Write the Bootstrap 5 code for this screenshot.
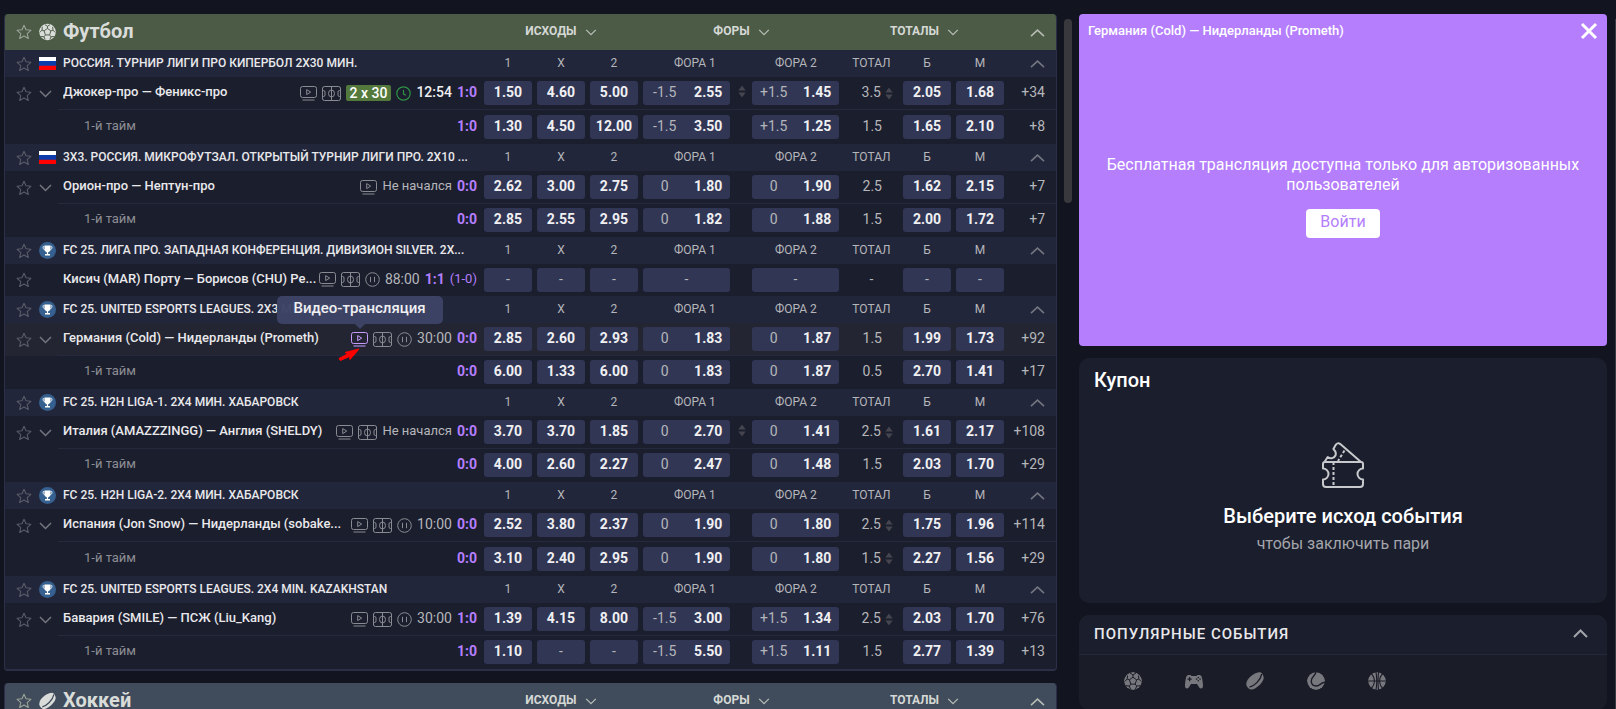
<!DOCTYPE html>
<html lang="ru">
<head>
<meta charset="utf-8">
<meta name="viewport" content="width=device-width, initial-scale=1">
<title>Live — Футбол</title>
<link href="https://cdn.jsdelivr.net/npm/bootstrap@5.3.0/dist/css/bootstrap.min.css" rel="stylesheet">
<style>
  :root { --page:#12151f; --panel:#1b1e2d; --band:#22263a; --odd:#313655; --line:#25293c; --violet:#b47efd; --soft:#b5b6ba; --dim:#8d8e94; }
  body { background:var(--page); color:#e9e9ec; font-family:Roboto,"Liberation Sans",sans-serif; font-size:14px; line-height:20px; }
  button { font:inherit; color:inherit; background:none; border:0; padding:0; }
  svg { display:block; flex:none; }
  .shell { height:100vh; padding:14px 0 0 4px; }
  .rail { width:22px; padding:5px 7px 0; flex:none; }
  .thumb { height:26vh; border-radius:4px; background:#39393d; }
  .sidebar { width:528px; flex:none; }
  .page-edge { width:1px; flex:none; margin:5px 0 0 8px; background:#3a3b42; }

  .line-block { background:var(--panel); border:1px solid #2b2f48; border-top:0; border-bottom-width:2px; border-radius:4px; overflow:hidden; margin-bottom:12px; }
  .line-table { width:100%; table-layout:fixed; border-collapse:separate; border-spacing:0; }
  .line-table th, .line-table td { padding:0; vertical-align:middle; }
  .w-tools { width:53px; } .w-odd { width:53px; } .w-f1 { width:109px; } .w-f2 { width:88px; } .w-total { width:63px; } .w-more { width:47px; }
  .tools { display:flex; align-items:center; gap:7px; padding-left:11px; }
  .star { color:#595c68; }
  .sport-row th { height:36px; }
  .sport-green { background:#4b5b46; } .sport-blue { background:#404c5c; }
  .sport-row .star { color:#9aa397; }
  .sport-name { font-size:20px; line-height:24px; font-weight:700; color:#d9dcd9; margin:0; padding:0 0 2px 5px; }
  .sport-icon { color:#d9dcd9; }
  .market { font-size:12px; font-weight:700; color:#d5d8d5; display:inline-flex; align-items:center; gap:8px; padding-bottom:3px; }
  .market svg { margin-top:3px; color:#b5bbb3; }
  .league-row th { height:27px; background:var(--band); font-size:12px; line-height:18px; font-weight:400; color:var(--soft); text-align:center; }
  .league-row th:not(:first-child):not(.more) { padding-bottom:2px; }
  .line-table th.odd-head { padding-right:5px; }
  .league-row th.league-name { font-weight:500; color:#e9e9ec; text-align:left; padding-left:5px; padding-right:7px; }
  .event-row td { height:33px; }
  .event-row td:not(:first-child) { border-bottom:1px solid var(--line); }
  .event-row.last td { border-bottom-color:transparent; }
  .roomy .sub td { height:34px; }
  .single td { height:32px; }
  .hovered td { background:#232632; }
  .info { display:flex; align-items:center; padding:0 7px 0 5px; }
  .teams, .period, .clock-text, .clock-live, .score, .half { padding-bottom:2px; }
  .teams { font-size:13px; font-weight:500; flex:1 1 0; min-width:0; }
  .period { font-size:13px; color:var(--dim); padding-left:21px; flex:1; }
  .marks { display:flex; align-items:center; gap:5px; flex:none; color:#898b92; }
  .clock-text { color:var(--soft); }
  .clock-live { color:#f0f0f2; font-weight:500; }
  .score { color:var(--violet); font-weight:700; }
  .half, .waiting { font-size:13px; }
  .half { color:var(--violet); }
  .fmt { background:#54793d; color:#fff; font-weight:500; line-height:16px; border-radius:2px; padding:0 4px; }
  .odd { background:var(--odd); border-radius:3px; height:24px; width:48px; display:flex; align-items:center; justify-content:center; font-weight:700; color:#f0f0f2; padding-bottom:2px; }
  .odd.wide { width:87px; flex:none; }
  .odd.wide span { flex:1; text-align:center; }
  .odd .hcp, .odd.off { color:var(--soft); font-weight:400; }
  .total { display:flex; align-items:center; justify-content:flex-end; gap:4px; color:var(--soft); padding-right:10px; }
  .total-value { padding-bottom:2px; }
  .total.plain { padding-right:21px; }
  .total.none { justify-content:center; padding:0; }
  .stepper { color:#44454f; }
  .line-table .more { color:var(--soft); padding-right:11px; text-align:right; }
  .line-table td.more { padding-bottom:2px; }
  .fold { color:#74767f; } .sport-row .fold { color:#b5bbb3; }
  .more .fold { display:inline-block; vertical-align:middle; }

  .hint-wrap { position:relative; color:#c89cff; }
  .hint { position:absolute; left:50%; bottom:23px; transform:translateX(-50%); width:166px; height:28px; line-height:25px; text-align:center; background:rgba(60,67,101,.97); color:#f0f0f2; border-radius:5px; font-weight:500; font-size:15px; z-index:2; }
  .hint::after { content:""; position:absolute; left:50%; top:100%; margin-left:-5px; border:5px solid transparent; border-top-color:#3c4365; border-bottom:0; }
  .pointer { position:absolute; right:8px; top:16px; z-index:2; }

  .stream { background:var(--violet); border-radius:4px; height:332px; margin-bottom:12px; padding:8px 9px; color:#fff; }
  .stream-title { font-size:13px; font-weight:500; line-height:18px; }
  .stream-body { padding-top:15px; }
  .stream-note { font-size:16px; line-height:20px; }
  .login { background:#fff; color:var(--violet); border-radius:4px; font-size:16px; height:29px; width:74px; margin-top:14px; line-height:24px; padding-bottom:3px; }
  .coupon { background:var(--panel); border-radius:10px; height:245px; margin-bottom:12px; padding:10px 15px; }
  .coupon h2 { font-size:20px; line-height:24px; font-weight:500; margin:0; color:#fff; }
  .coupon-body { padding-top:12px; }
  .coupon .lead-text { font-size:20px; line-height:24px; font-weight:500; color:#fff; margin:16px 0 4px; }
  .coupon .sub-text { font-size:16px; line-height:24px; color:#a4a5ab; margin:0; }
  .popular { background:#1a1c27; border-radius:10px; overflow:hidden; }
  .popular-head { background:var(--panel); border-bottom:1px solid var(--line); height:40px; padding:0 19px 2px 15px; }
  .popular-head h2 { font-size:15px; line-height:20px; letter-spacing:1px; font-weight:500; margin:0; }
  .popular-tabs { color:#77787e; padding:17px 45px 20px; gap:43px; }
</style>
</head>
<body class="overflow-hidden">

<svg class="position-absolute" width="0" height="0" aria-hidden="true">
  <symbol id="i-star" viewBox="0 0 16 16"><path d="M8 1.3l2 4.5 4.9.5-3.7 3.3 1.1 4.8L8 11.9l-4.300 2.500 1.100-4.800L1.100 6.300 6 5.800z" fill="none" stroke="currentColor" stroke-width="1.100" stroke-linejoin="round"/></symbol>
  <symbol id="i-down" viewBox="0 0 13 8"><path d="M1 1l5.500 5.500L12 1" fill="none" stroke="currentColor" stroke-width="1.500"/></symbol>
  <symbol id="i-up" viewBox="0 0 15 8"><path d="M1 7.200l6.500-6 6.500 6" fill="none" stroke="currentColor" stroke-width="1.600"/></symbol>
  <symbol id="i-tv" viewBox="0 0 17 15"><g fill="none" stroke="currentColor"><rect x=".5" y=".5" width="16" height="11" rx="2"/><path d="M6.700 3.600v5l4-2.500z" stroke-linejoin="round"/><path d="M2.500 14h12"/></g></symbol>
  <symbol id="i-field" viewBox="0 0 19 15"><g fill="none" stroke="currentColor"><path d="M.5 3V2.500A2 2 0 0 1 2.500.5h14a2 2 0 0 1 2 2V3M.5 12v.5a2 2 0 0 0 2 2h14a2 2 0 0 0 2-2V12M9.500.5v14M.5 4.500h1a1.500 1.500 0 0 1 1.500 1.500v3a1.500 1.500 0 0 1-1.500 1.500h-1M18.500 4.500h-1A1.500 1.500 0 0 0 16 6v3a1.500 1.500 0 0 0 1.500 1.500h1M.5 2v11M18.500 2v11"/><ellipse cx="9.500" cy="7.500" rx="3" ry="3.500"/></g></symbol>
  <symbol id="i-pause" viewBox="0 0 15 15"><g fill="none" stroke="currentColor"><circle cx="7.500" cy="7.500" r="6.800"/><path d="M5.500 4.800v5.400M9.500 4.800v5.400"/></g></symbol>
  <symbol id="i-clock" viewBox="0 0 15 15"><g fill="none" stroke="#2f9146" stroke-width="1.200"><circle cx="7.500" cy="7.500" r="6.700"/><path d="M7.500 3.800v4.200l2.500 1.200"/></g></symbol>
  <symbol id="i-step" viewBox="0 0 8 13"><path d="M4 .5l3.700 5H.3zM4 12.500l3.700-5H.3z" fill="currentColor"/></symbol>
  <symbol id="i-flag" viewBox="0 0 17 13"><path fill="#fff" d="M0 0h17v4.500H0z"/><path fill="#0b3cab" d="M0 4h17v5H0z"/><path fill="#f00" d="M0 8.700h17V13H0z"/></symbol>
  <symbol id="i-cup" viewBox="0 0 17 17"><circle cx="8.500" cy="8.500" r="8.500" fill="#35608f"/><path fill="#fff" d="M5.500 3.500h6v3.500c0 2-1.200 3-2.400 3.300v1.700H11v1.500H6V12h1.900v-1.700C6.700 10 5.500 9 5.500 7z"/><path d="M5.500 4.700H4c0 2 .6 3 2 3.300M11.500 4.700H13c0 2-.6 3-2 3.300" fill="none" stroke="#fff" stroke-width=".8"/></symbol>
  <mask id="m-ball"><circle cx="9" cy="9" r="9" fill="#fff"/><g fill="none" stroke="#000" stroke-width="1"><path d="M9 5.200l3.600 2.600-1.400 4.300H6.800L5.400 7.800zM9 5.200V3M12.600 7.800l2.200-.8M11.200 12.100l1.500 2M6.800 12.100l-1.500 2M5.400 7.800L3.200 7M9 3L6 1M9 3l3-2M3.200 7L3.500 3.500M3.200 7L.8 9.500M14.800 7l-.3-3.500M14.800 7l2.400 2.500M12.700 14.100l3.300-.4M12.700 14.100L11.500 17M5.300 14.100l-3.300-.4M5.300 14.100L6.500 17"/></g></mask>
  <symbol id="i-ball" viewBox="0 0 18 18"><circle cx="9" cy="9" r="9" fill="currentColor" mask="url(#m-ball)"/></symbol>
  <mask id="m-puck"><path d="M0 0h18v18H0z" fill="#fff"/><path d="M3.500 15.200C8 14 14.500 8.500 15.800 2" fill="none" stroke="#000" stroke-width="1.300"/></mask>
  <symbol id="i-puck" viewBox="0 0 18 18"><path d="M.7 14C-.8 10.800 2 6 6.500 3 10 .6 13.300-.4 14.800.6c1.300.8 2.800 3 2.900 5.300-.3 4.300-7.200 11-12.200 11.700C3.700 17.700 1.500 15.800.7 14z" fill="currentColor" mask="url(#m-puck)"/></symbol>
  <symbol id="i-pad" viewBox="0 0 18 18"><path fill="currentColor" fill-rule="evenodd" d="M3.500 3h2l1 1h5l1-1h2c1.300 0 2 1 2.400 2.500.6 2.500 1.100 6 1.100 8.500 0 1.500-.8 2.500-2 2.500S14 15.500 13 13.500L12 12H6l-1 1.500c-1 2-1.800 3-3 3S0 15.500 0 14c0-2.500.5-6 1.100-8.500C1.500 4 2.200 3 3.500 3zM4 5v1.500H2.500v1.200H4v1.500h1.200V7.700h1.500V6.500H5.200V5zm9.300-.3a.8.800 0 1 0 0 1.600.8.800 0 0 0 0-1.600zm0 3.300a.8.800 0 1 0 0 1.600.8.800 0 0 0 0-1.600zm-1.700-1.700a.8.800 0 1 0 0 1.600.8.800 0 0 0 0-1.600zm3.400 0a.8.800 0 1 0 0 1.600.8.800 0 0 0 0-1.600z"/></symbol>
  <mask id="m-ten"><circle cx="9" cy="9" r="9" fill="#fff"/><path d="M9-.5C9 3.500 4.300 4 4.300 9c0 3.500 2.300 5 5 5 3.500 0 4.500-3.700 9-3.700" fill="none" stroke="#000" stroke-width="1.400"/></mask>
  <symbol id="i-tennis" viewBox="0 0 18 18"><circle cx="9" cy="9" r="9" fill="currentColor" mask="url(#m-ten)"/></symbol>
  <mask id="m-bas"><circle cx="9" cy="9" r="9" fill="#fff"/><path d="M0 9h18M3 1.500c4.500 4 4.500 11 0 15M15 1.500c-4.500 4-4.500 11 0 15M8 0c1 6 1 12 0 18M10.500 0c-.6 6-.6 12 0 18" fill="none" stroke="#000" stroke-width="1.100"/></mask>
  <symbol id="i-basket" viewBox="0 0 18 18"><circle cx="9" cy="9" r="9" fill="currentColor" mask="url(#m-bas)"/></symbol>
</svg>

<div class="shell d-flex overflow-hidden">
  <main class="flex-grow-1" id="lines"></main>
  <div class="rail"><div class="thumb"></div></div>

  <aside class="sidebar">
    <section class="stream d-flex flex-column">
      <div class="d-flex justify-content-between">
        <span class="stream-title">Германия (Cold) — Нидерланды (Prometh)</span>
        <button type="button" aria-label="Закрыть"><svg width="18" height="18" viewBox="0 0 18 18"><path d="M2 2l14 14M16 2L2 16" stroke="#fff" stroke-width="3"/></svg></button>
      </div>
      <div class="stream-body flex-grow-1 d-flex flex-column align-items-center justify-content-center text-center">
        <p class="stream-note mb-0">Бесплатная трансляция доступна только для авторизованных пользователей</p>
        <button type="button" class="login">Войти</button>
      </div>
    </section>

    <section class="coupon d-flex flex-column">
      <h2>Купон</h2>
      <div class="coupon-body flex-grow-1 d-flex flex-column align-items-center justify-content-center text-center">
        <svg width="42" height="46" viewBox="0 0 42 46"><g fill="none" stroke="#c8c9cc" stroke-width="2" stroke-linejoin="round"><path d="M3 20h36a2 2 0 0 1 2 2v4.500a5.500 5.500 0 0 0 0 11V42a3 3 0 0 1-3 3H4a3 3 0 0 1-3-3v-4.500a5.500 5.500 0 0 0 0-11V22a2 2 0 0 1 2-2z"/><path d="M2.500 20l3.200-5c3 2.500 6.600 1 7.700-1.500 1-2.300.2-4.500-2-6.500l2.400-4.200c.9-1.500 2.700-2 4.200-1L39 20"/><path d="M11.500 20v25" stroke-dasharray="3 2"/><path d="M22.500 8.500L16 19" stroke-dasharray="3 2"/></g></svg>
        <p class="lead-text">Выберите исход события</p>
        <p class="sub-text">чтобы заключить пари</p>
      </div>
    </section>

    <section class="popular">
      <div class="popular-head d-flex align-items-center justify-content-between">
        <h2>ПОПУЛЯРНЫЕ СОБЫТИЯ</h2>
        <button type="button" aria-label="Свернуть"><svg width="15" height="9" viewBox="0 0 15 9"><path d="M1 8l6.500-6.500L14 8" fill="none" stroke="#a4a5ab" stroke-width="2"/></svg></button>
      </div>
      <div class="popular-tabs d-flex">
        <button type="button" aria-label="Футбол"><svg width="18" height="18"><use href="#i-ball"/></svg></button>
        <button type="button" aria-label="Киберспорт"><svg width="18" height="18"><use href="#i-pad"/></svg></button>
        <button type="button" aria-label="Хоккей"><svg width="18" height="18"><use href="#i-puck"/></svg></button>
        <button type="button" aria-label="Теннис"><svg width="18" height="18"><use href="#i-tennis"/></svg></button>
        <button type="button" aria-label="Баскетбол"><svg width="18" height="18"><use href="#i-basket"/></svg></button>
      </div>
    </section>
  </aside>
  <div class="page-edge"></div>
</div>

<script src="https://cdn.jsdelivr.net/npm/bootstrap@5.3.0/dist/js/bootstrap.bundle.min.js"></script>
<script>
  const icon = (id, w, h, cls = '') => `<svg class="${cls}" width="${w}" height="${h}"><use href="#i-${id}"/></svg>`;
  const star = () => `<button type="button" class="star" aria-label="В избранное">${icon('star', 16, 16)}</button>`;
  const fold = () => `<button type="button" class="fold" aria-label="Свернуть">${icon('up', 15, 8)}</button>`;
  const stepper = () => `<button type="button" class="stepper" aria-label="Другие значения">${icon('step', 8, 13)}</button>`;

  // Odds order: 1, X, 2, [handicap 1, odd], [handicap 2, odd], total, over, under, extra markets.
  // f1step / tstep: the handicap or the total can be switched.
  const leagues = [
    { icon: 'flag', name: 'РОССИЯ. ТУРНИР ЛИГИ ПРО КИПЕРБОЛ 2X30 МИН.', roomy: true, rows: [
      { teams: 'Джокер-про — Феникс-про', marks: ['tv', 'field', 'fmt', 'clock'], live: '12:54', score: '1:0', odds: ['1.50', '4.60', '5.00', ['-1.5', '2.55'], ['+1.5', '1.45'], '3.5', '2.05', '1.68', '+34'], f1step: true, tstep: true },
      { score: '1:0', odds: ['1.30', '4.50', '12.00', ['-1.5', '3.50'], ['+1.5', '1.25'], '1.5', '1.65', '2.10', '+8'] } ] },
    { icon: 'flag', name: '3X3. РОССИЯ. МИКРОФУТЗАЛ. ОТКРЫТЫЙ ТУРНИР ЛИГИ ПРО. 2X10 ...', rows: [
      { teams: 'Орион-про — Нептун-про', marks: ['tv'], wait: 'Не начался', score: '0:0', odds: ['2.62', '3.00', '2.75', ['0', '1.80'], ['0', '1.90'], '2.5', '1.62', '2.15', '+7'] },
      { score: '0:0', odds: ['2.85', '2.55', '2.95', ['0', '1.82'], ['0', '1.88'], '1.5', '2.00', '1.72', '+7'] } ] },
    { icon: 'cup', name: 'FC 25. ЛИГА ПРО. ЗАПАДНАЯ КОНФЕРЕНЦИЯ. ДИВИЗИОН SILVER. 2X...', rows: [
      { teams: 'Кисич (MAR) Порту — Борисов (CHU) Ре...', marks: ['tv', 'field', 'pause'], time: '88:00', score: '1:1', half: '(1-0)', single: true, odds: ['-', '-', '-', '-', '-', '-', '-', '-', ''] } ] },
    { icon: 'cup', name: 'FC 25. UNITED ESPORTS LEAGUES. 2X3 MIN. CZECH REPUBLIC', rows: [
      { teams: 'Германия (Cold) — Нидерланды (Prometh)', marks: ['tvhint', 'field', 'pause'], time: '30:00', score: '0:0', hovered: true, odds: ['2.85', '2.60', '2.93', ['0', '1.83'], ['0', '1.87'], '1.5', '1.99', '1.73', '+92'] },
      { score: '0:0', odds: ['6.00', '1.33', '6.00', ['0', '1.83'], ['0', '1.87'], '0.5', '2.70', '1.41', '+17'] } ] },
    { icon: 'cup', name: 'FC 25. H2H LIGA-1. 2X4 МИН. ХАБАРОВСК', rows: [
      { teams: 'Италия (AMAZZZINGG) — Англия (SHELDY)', marks: ['tv', 'field'], wait: 'Не начался', score: '0:0', odds: ['3.70', '3.70', '1.85', ['0', '2.70'], ['0', '1.41'], '2.5', '1.61', '2.17', '+108'], f1step: true, tstep: true },
      { score: '0:0', odds: ['4.00', '2.60', '2.27', ['0', '2.47'], ['0', '1.48'], '1.5', '2.03', '1.70', '+29'] } ] },
    { icon: 'cup', name: 'FC 25. H2H LIGA-2. 2X4 МИН. ХАБАРОВСК', roomy: true, rows: [
      { teams: 'Испания (Jon Snow) — Нидерланды (sobake...', marks: ['tv', 'field', 'pause'], time: '10:00', score: '0:0', odds: ['2.52', '3.80', '2.37', ['0', '1.90'], ['0', '1.80'], '2.5', '1.75', '1.96', '+114'], tstep: true },
      { score: '0:0', odds: ['3.10', '2.40', '2.95', ['0', '1.90'], ['0', '1.80'], '1.5', '2.27', '1.56', '+29'], tstep: true } ] },
    { icon: 'cup', name: 'FC 25. UNITED ESPORTS LEAGUES. 2X4 MIN. KAZAKHSTAN', rows: [
      { teams: 'Бавария (SMILE) — ПСЖ (Liu_Kang)', marks: ['tv', 'field', 'pause'], time: '30:00', score: '1:0', odds: ['1.39', '4.15', '8.00', ['-1.5', '3.00'], ['+1.5', '1.34'], '2.5', '2.03', '1.70', '+76'], tstep: true },
      { score: '1:0', odds: ['1.10', '-', '-', ['-1.5', '5.50'], ['+1.5', '1.11'], '1.5', '2.77', '1.39', '+13'] } ] }
  ];

  const markIcons = {
    tv: icon('tv', 17, 15),
    field: icon('field', 19, 15),
    pause: icon('pause', 15, 15),
    clock: icon('clock', 15, 15),
    fmt: '<span class="fmt">2 x 30</span>',
    tvhint: `<span class="hint-wrap">${icon('tv', 17, 15)}<span class="hint" role="tooltip">Видео-трансляция</span>
      <svg class="pointer" width="22" height="13" viewBox="0 0 22 13"><path d="M21 1L7 4.500l3 1.300L1 10.500 2.300 12.500 11.500 8.500l.5 3z" fill="#f00" stroke="#f00"/></svg></span>`
  };

  const odd = v => `<td><button type="button" class="odd ${v === '-' ? 'off' : ''}">${v}</button></td>`;
  const wide = v => Array.isArray(v)
    ? `<button type="button" class="odd wide"><span class="hcp">${v[0]}</span><span>${v[1]}</span></button>`
    : `<button type="button" class="odd wide off">${v}</button>`;

  const clock = r => r.live ? `<span class="clock-live">${r.live}</span>`
    : r.wait ? `<span class="clock-text waiting">${r.wait}</span>`
    : r.time ? `<span class="clock-text">${r.time}</span>` : '';

  const eventRow = (r, last) => {
    const o = r.odds;
    const cls = [r.teams ? '' : 'sub', r.single ? 'single' : '', r.hovered ? 'hovered' : '', last ? 'last' : ''].join(' ');
    const expander = r.single ? '' : `<button type="button" class="fold" aria-label="Раскрыть">${icon('down', 13, 8)}</button>`;
    const name = r.teams ? `<span class="teams text-truncate">${r.teams}</span>` : '<span class="period">1-й тайм</span>';
    return `<tr class="event-row ${cls}">
      <td>${r.teams ? `<div class="tools">${star()}${expander}</div>` : ''}</td>
      <td><div class="info">${name}<span class="marks">${(r.marks || []).map(m => markIcons[m]).join('')}${clock(r)}<span class="score">${r.score}</span>${r.half ? `<span class="half">${r.half}</span>` : ''}</span></div></td>
      ${odd(o[0])}${odd(o[1])}${odd(o[2])}
      <td><div class="d-flex align-items-center">${wide(o[3])}${r.f1step ? `<span class="ps-2">${stepper()}</span>` : ''}</div></td>
      <td>${wide(o[4])}</td>
      <td><div class="total ${o[5] === '-' ? 'none' : r.tstep ? '' : 'plain'}"><span class="total-value">${o[5]}</span>${r.tstep ? stepper() : ''}</div></td>
      ${odd(o[6])}${odd(o[7])}
      <td class="more">${o[8]}</td></tr>`;
  };

  const league = l => `<tbody class="${l.roomy ? 'roomy' : ''}">
    <tr class="league-row"><th><div class="tools">${star()}${l.icon === 'flag' ? icon('flag', 17, 13) : icon('cup', 17, 17)}</div></th>
    <th class="league-name text-truncate" scope="colgroup">${l.name}</th>
    <th class="odd-head">1</th><th class="odd-head">X</th><th class="odd-head">2</th><th class="odd-head">ФОРА 1</th><th>ФОРА 2</th><th>ТОТАЛ</th>
    <th class="odd-head">Б</th><th class="odd-head">М</th><th class="more">${fold()}</th></tr>
    ${l.rows.map((r, i) => eventRow(r, i === l.rows.length - 1)).join('')}</tbody>`;

  const market = t => `<button type="button" class="market">${t}${icon('down', 12, 7)}</button>`;
  const block = (name, ico, tone, list) => `<section class="line-block"><table class="line-table">
    <colgroup><col class="w-tools"><col><col class="w-odd"><col class="w-odd"><col class="w-odd"><col class="w-f1"><col class="w-f2"><col class="w-total"><col class="w-odd"><col class="w-odd"><col class="w-more"></colgroup>
    <thead><tr class="sport-row ${tone}"><th><div class="tools">${star()}${icon(ico, 17, 18, 'sport-icon')}</div></th>
    <th><h2 class="sport-name">${name}</h2></th><th colspan="3" class="odd-head text-center">${market('ИСХОДЫ')}</th><th colspan="2" class="text-center">${market('ФОРЫ')}</th>
    <th colspan="3" class="text-center">${market('ТОТАЛЫ')}</th><th class="more">${fold()}</th></tr></thead>${list.map(league).join('')}</table></section>`;

  document.getElementById('lines').innerHTML =
    block('Футбол', 'ball', 'sport-green', leagues) + block('Хоккей', 'puck', 'sport-blue', []);
</script>
</body>
</html>
